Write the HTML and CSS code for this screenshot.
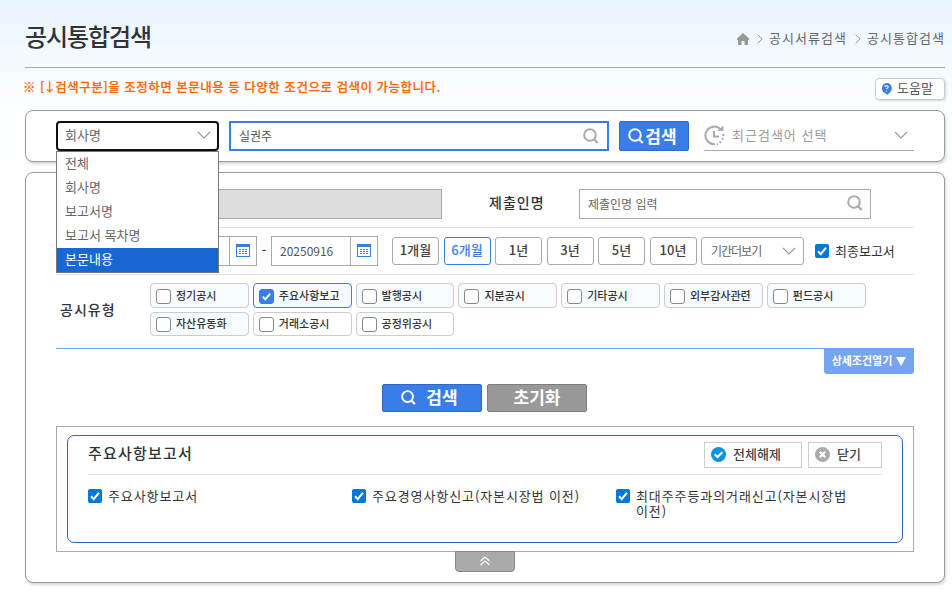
FILE: index.html
```html
<!DOCTYPE html>
<html lang="ko">
<head>
  <meta charset="utf-8">
  <title>공시통합검색</title>
  <link rel="stylesheet" href="styles.css">
</head>
<body>
<svg class="sprite" width="0" height="0">
  <symbol id="glass" viewBox="0 0 16 16">
    <circle cx="7" cy="7" r="5.8" fill="none" stroke="currentColor" stroke-width="2"/>
    <path d="M10.8 11l4 4" fill="none" stroke="currentColor" stroke-width="2.2"/>
  </symbol>
  <symbol id="down" viewBox="0 0 14 8">
    <path d="M1 1l6 6 6-6" fill="none" stroke="currentColor" stroke-width="1.1"/>
  </symbol>
  <symbol id="right" viewBox="0 0 6 10">
    <path d="M.7 .7L5.2 5 .7 9.3" fill="none" stroke="currentColor" stroke-width="1"/>
  </symbol>
  <symbol id="calendar" viewBox="0 0 14 13">
    <path d="M0 0h14v13H0zM1 3V12h12V3z" fill="#3b7de6" fill-rule="evenodd"/>
    <path d="M3 5.5h8M3 7.5h8M3 9.5h8" stroke="#3b7de6" stroke-width="1" stroke-dasharray="2 1" fill="none"/>
  </symbol>
  <symbol id="check" viewBox="0 0 14 14">
    <path d="M3 7.3l2.7 2.8L11 3.8" fill="none" stroke="#fff" stroke-width="2.1"/>
  </symbol>
</svg>
<div id="container">
  <div class="header">
    <h2>공시통합검색</h2>
    <div class="location">
      <svg class="home" width="12" height="12" viewBox="0 0 12 12"><path d="M6 0L0 5.6V7h1v5h3.5V8h3v4H11V7h1V5.6z" fill="#999"/></svg>
      <svg class="gt" width="6" height="10"><use href="#right"/></svg>
      <span>공시서류검색</span>
      <svg class="gt" width="6" height="10"><use href="#right"/></svg>
      <span>공시통합검색</span>
    </div>
  </div>
  <div class="guide">
    <p>※ <span>[↓</span>검색구분]을 조정하면 본문내용 등 다양한 조건으로 검색이 가능합니다.</p>
    <a class="help" href="javascript:;">
      <svg width="11" height="12" viewBox="0 0 10 11"><path d="M5 0a5 5 0 0 1 2.4 9.3L5.6 11 4.6 9.6A4.9 4.9 0 0 1 5 0z" fill="#3b7de6"/><path d="M3.4 3.6c.2-1.6 3.2-1.5 3.1.1 0 1-1.5 1-1.5 2.1M5 6.8v1" fill="none" stroke="#fff" stroke-width="1"/></svg>
      <span>도움말</span>
    </a>
  </div>

  <!-- 상단 검색 -->
  <div class="panel quick">
    <div class="option">
      <div class="selected"><span>회사명</span><svg width="14" height="8"><use href="#down"/></svg></div>
      <ul class="list">
        <li>전체</li>
        <li>회사명</li>
        <li>보고서명</li>
        <li>보고서 목차명</li>
        <li class="on">본문내용</li>
      </ul>
    </div>
    <div class="keyword"><span>실권주</span><svg width="16" height="16"><use href="#glass"/></svg></div>
    <a class="btnSearch" href="javascript:;"><svg width="16" height="16"><use href="#glass"/></svg><span>검색</span></a>
    <div class="recent">
      <svg width="21" height="21" viewBox="0 0 21 21" fill="none" stroke="#aaa"><path d="M11 19.200A8.800 8.800 0 1 1 16 3.800" stroke-width="2"/><path d="M13.200 5.800L19.500 6V.500z" fill="#aaa" stroke="none"/><path d="M10 6v5.500h5" stroke-width="2"/><path d="M19.200 9a8.800 8.800 0 0 1-6.500 10" stroke-width="2" stroke-dasharray="2 2"/></svg>
      <span>최근검색어 선택</span>
      <svg class="arrow" width="14" height="8"><use href="#down"/></svg>
    </div>
  </div>

  <!-- 상세 조건 -->
  <div class="panel detail">
    <div class="row names">
      <div class="company"></div>
      <label>제출인명</label>
      <div class="submitter"><span>제출인명 입력</span><svg width="16" height="16"><use href="#glass"/></svg></div>
    </div>
    <div class="row period">
      <div class="date start"><span></span><i><svg width="14" height="13"><use href="#calendar"/></svg></i></div>
      <b class="dash">-</b>
      <div class="date end"><span>20250916</span><i><svg width="14" height="13"><use href="#calendar"/></svg></i></div>
      <div class="terms">
        <a>1개월</a><a class="on">6개월</a><a>1년</a><a>3년</a><a>5년</a><a>10년</a>
      </div>
      <div class="more"><span>기간더보기</span><svg width="14" height="8"><use href="#down"/></svg></div>
      <label class="final"><svg class="chk" width="14" height="14"><use href="#check"/></svg><span>최종보고서</span></label>
    </div>
    <div class="row types">
      <h4>공시유형</h4>
      <ul>
        <li><i></i>정기공시</li>
        <li class="on"><i><svg width="13" height="13" viewBox="0 0 14 14"><use href="#check"/></svg></i>주요사항보고</li>
        <li><i></i>발행공시</li>
        <li><i></i>지분공시</li>
        <li><i></i>기타공시</li>
        <li><i></i>외부감사관련</li>
        <li><i></i>펀드공시</li>
        <li><i></i>자산유동화</li>
        <li class="plain"><i></i>거래소공시</li>
        <li class="plain"><i></i>공정위공시</li>
      </ul>
    </div>
    <div class="openLine">
      <a class="open"><span>상세조건열기</span><svg width="10" height="9" viewBox="0 0 10 9"><path d="M0 0h10L5 9z" fill="#fff"/></svg></a>
    </div>
    <div class="buttons">
      <a class="submit"><svg width="15" height="15" viewBox="0 0 16 16"><use href="#glass"/></svg><span>검색</span></a>
      <a class="reset"><span>초기화</span></a>
    </div>
    <div class="outer">
      <div class="inner">
        <div class="innerTop">
          <h4>주요사항보고서</h4>
          <a class="all"><svg width="15" height="15" viewBox="0 0 15 15"><circle cx="7.500" cy="7.500" r="7.500" fill="#1090e0"/><path d="M3.700 7.300l2.800 2.800 4.800-4.900" fill="none" stroke="#fff" stroke-width="2.100"/></svg><span>전체해제</span></a>
          <a class="close"><svg width="15" height="15" viewBox="0 0 15 15"><circle cx="7.500" cy="7.500" r="7.500" fill="#aaa"/><path d="M4.800 4.800l5.400 5.400M10.200 4.800l-5.400 5.400" stroke="#fff" stroke-width="2.300"/></svg><span>닫기</span></a>
        </div>
        <ul>
          <li><svg class="chk" width="14" height="14"><use href="#check"/></svg><span>주요사항보고서</span></li>
          <li><svg class="chk" width="14" height="14"><use href="#check"/></svg><span>주요경영사항신고(자본시장법 이전)</span></li>
          <li><svg class="chk" width="14" height="14"><use href="#check"/></svg><span>최대주주등과의거래신고(자본시장법<br>이전)</span></li>
        </ul>
      </div>
    </div>
    <a class="fold"><svg width="10" height="10" viewBox="0 0 10 10"><path d="M.5 5L5 1l4.500 4M.5 9L5 5l4.500 4" fill="none" stroke="#fff" stroke-width="1.100"/></svg></a>
  </div>
</div>
</body>
</html>
```
FILE: styles.css
```css
body,h2,h4,p,ul,li{margin:0;padding:0;}
*{box-sizing:border-box;}
body{height:594px;overflow:hidden;font-family:"Noto Sans CJK KR","Noto Sans",sans-serif;font-size:13px;line-height:16px;color:#333;background:linear-gradient(#e8f4ff 0,#f2f9ff 50px,#fcfeff 110px,#fff 180px);}
ul{list-style:none;}
i{font-style:normal;}
a{color:inherit;text-decoration:none;}
svg{display:block;flex:none;}
.sprite{position:absolute;}
#container{width:920px;margin-left:25px;white-space:nowrap;}
.header{height:68px;padding-top:10px;border-bottom:1px solid #a5a8ac;display:flex;justify-content:space-between;align-items:center;}
.header h2{font-size:24px;line-height:30px;font-weight:500;letter-spacing:-1.100px;margin-top:-5px;}
.location{display:flex;align-items:center;color:#666;letter-spacing:1.050px;}
.location .gt{margin:0 6px 0 8px;color:#999;}
.location span{height:18px;}

.guide{height:42px;display:flex;justify-content:space-between;}
.guide p{margin:11px 0 0 -2px;font-size:12.500px;font-weight:500;color:#ff6600;letter-spacing:.51px;-webkit-text-stroke:.2px #ff6600;}
.guide p span{letter-spacing:-.9px;}
.help{width:70px;height:22px;margin-top:10px;padding:0 0 1px 5px;display:flex;align-items:center;gap:5px;border:1px solid #ccc;border-radius:4px;background:#fff;box-shadow:1px 1px 2px rgba(0,0,0,.15);color:#555;}
.help span{margin-top:-1px;}

.panel{border:1px solid #999;border-radius:8px;background:#fff;box-shadow:1px 2px 3px rgba(0,0,0,.17);}
.quick{height:52px;padding:10px 30px;display:flex;}
.option{position:relative;width:163px;height:30px;}
.selected{height:30px;padding:0 6px 2px 7px;display:flex;justify-content:space-between;align-items:center;border:2px solid #101010;border-radius:4px;background:#fff;color:#666;}
.selected svg,.more svg,.recent .arrow{color:#999;}
.option .list{position:absolute;left:0;top:30px;z-index:2;width:163px;border:1px solid #767676;background:#fff;}
.list li{height:24px;padding-left:8px;line-height:22px;color:#666;}
.list .on{background:#1967d2;color:#fff;}
.keyword{width:380px;height:30px;margin-left:10px;padding:0 8px;display:flex;justify-content:space-between;align-items:center;border:2px solid #3b7de6;color:#555;font-size:12px;}
.keyword svg,.submitter svg{margin-bottom:1px;color:#aaa;}
.btnSearch{width:70px;height:30px;margin-left:10px;padding-right:3px;display:flex;justify-content:center;align-items:center;gap:1px;border:1px solid #2e6bc9;border-radius:2px;background:#3b7de6;color:#fff;font-size:17px;font-weight:bold;}
.recent{width:210px;height:30px;margin-left:15px;padding:0 6px 1px 0;display:flex;align-items:center;border-bottom:1px solid #aaa;color:#999;letter-spacing:1px;}
.recent span{flex:1;margin:-1px 0 0 7px;}

.detail{height:411px;margin-top:10px;padding:0 30px;}
.row{display:flex;border-bottom:1px solid #e0e0e0;}
.names{height:55px;padding-top:16px;}
.company{width:292px;height:30px;margin-left:94px;border:1px solid #aaa;background:#ddd;}
.names label{width:137px;padding:5px 0 0 47px;font-size:14px;font-weight:500;letter-spacing:1px;}
.submitter{width:292px;height:30px;padding:0 7px 1px 8px;display:flex;justify-content:space-between;align-items:center;border:1px solid #aaa;font-size:12px;color:#666;}
.period{height:47px;padding-top:8px;}
.date{width:107px;height:30px;display:flex;border:1px solid #aaa;font-size:12px;line-height:27px;color:#555;}
.date.start{margin-left:94px;}
.date span{flex:1;padding-left:8px;}
.date i{width:27px;padding:7px 0 0 6px;border-left:1px solid #aaa;}
.dash{width:14px;text-align:center;line-height:28px;font-weight:500;}
.terms{display:flex;gap:4.500px;margin:1px 4.500px 0 14px;}
.terms a{width:47px;height:28px;line-height:24px;text-align:center;border:1px solid #aaa;border-radius:3px;font-weight:500;color:#444;}
.terms .on{border-color:#3b7de6;color:#3b7de6;}
.more{width:103px;height:28px;margin-top:1px;padding:0 7px 1px 9px;display:flex;justify-content:space-between;align-items:center;border:1px solid #aaa;border-radius:3px;font-size:12px;letter-spacing:-1px;color:#666;}
.final{display:flex;align-items:center;gap:6px;height:30px;margin-left:11px;}
.chk{border-radius:2px;background:#0078d7;}
.types{height:74px;padding-top:8px;border-bottom:1px solid #75a4f0;}
.types h4{width:94px;padding:18px 0 0 4px;font-size:14px;font-weight:500;letter-spacing:1px;}
.types ul{display:grid;grid-template-columns:repeat(7,98.800px);grid-template-rows:25px 24px;gap:4px;}
.types li{display:flex;align-items:center;padding:0 0 2px 5px;border:1px solid #ccc;border-radius:4px;background:#f5fbff;font-size:11px;line-height:22px;font-weight:500;color:#333;}
.types li i{width:15px;height:15px;margin:3px 5px 0 0;border:1px solid #888;border-radius:3px;background:#fff;}
.types li.on{border-color:#3b7de6;}
.types li.on i{border-color:#3b7de6;background:#3b7de6;}
.types li.plain{background:#fff;}
.openLine{height:35px;display:flex;justify-content:flex-end;}
.open{width:90px;height:26px;margin-top:-1px;padding-bottom:2px;display:flex;align-items:center;justify-content:center;gap:4px;border-radius:0 0 3px 3px;background:#75a4f0;color:#fff;font-size:11px;font-weight:bold;}
.open svg{margin-top:2px;}
.buttons{display:flex;justify-content:center;gap:5px;height:42px;padding-right:1px;}
.buttons a{width:100px;height:28px;padding:0 5px 1px 0;display:flex;align-items:center;justify-content:center;gap:10px;border:1px solid #2e6bc9;border-radius:2px;background:#3b7de6;color:#fff;font-size:17px;font-weight:bold;}
.buttons span{margin-top:-1px;}
.buttons .reset{padding-right:0;border-color:#7d7d7d;background:#999;}
.outer{height:126px;padding:8px 10px;border:1px solid #aaa;}
.inner{height:108px;padding:0 20px;border:1px solid #2f62c8;border-radius:7px;}
.innerTop{height:39px;display:flex;border-bottom:1px solid #e0e0e0;}
.innerTop h4{flex:1;padding-top:9px;font-size:15px;font-weight:500;letter-spacing:1.200px;}
.innerTop a{height:26px;margin-top:6px;padding:0 0 1px 6px;display:flex;align-items:center;gap:7px;border:1px solid #ccc;font-weight:500;color:#444;}
.innerTop a span{margin-top:-1px;}
.all{width:98px;}
.close{width:74px;margin-left:6px;}
.inner ul{display:flex;padding-top:14px;}
.inner li{width:264px;display:flex;gap:6px;line-height:15px;letter-spacing:.9px;}
.inner li span{margin-top:-1px;}
.fold{width:60px;height:21px;margin:-1px auto 0;padding-bottom:2px;display:flex;align-items:center;justify-content:center;border:1px solid #888;border-radius:0 0 4px 4px;background:#aaa;}
```
